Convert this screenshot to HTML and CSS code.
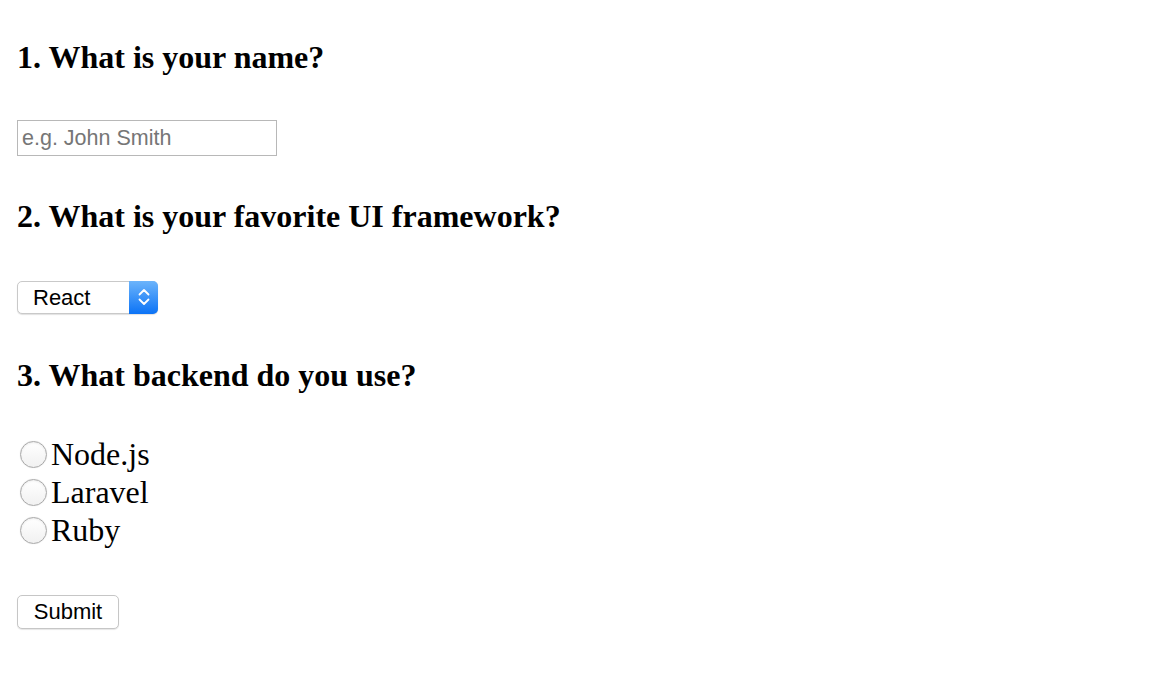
FILE: index.html
```html
<!DOCTYPE html>
<html lang="en">
<head>
    <meta charset="UTF-8">
    <meta name="viewport" content="width=device-width, initial-scale=1.0">
    <title>Survey</title>
    <link rel="stylesheet" href="styles.css">
</head>
<body>
    <form class="survey" onsubmit="return false;">
        <section class="question">
            <h2 class="question-title">1. What is your name?</h2>
            <div class="answer">
                <input type="text" class="text-field" name="name" placeholder="e.g. John Smith">
            </div>
        </section>

        <section class="question">
            <h2 class="question-title">2. What is your favorite UI framework?</h2>
            <div class="answer">
                <div class="select-wrap">
                    <select class="select-field" name="framework">
                        <option>React</option>
                        <option>Vue</option>
                        <option>Angular</option>
                    </select>
                    <span class="select-arrow">
                        <svg width="14" height="22" viewBox="0 0 14 22" fill="none" stroke="#fff" stroke-width="1.8" stroke-linecap="round" stroke-linejoin="round">
                            <path d="M2.5 8.5 L7 4 L11.5 8.5"/>
                            <path d="M2.5 13.5 L7 18 L11.5 13.5"/>
                        </svg>
                    </span>
                </div>
            </div>
        </section>

        <section class="question">
            <h2 class="question-title">3. What backend do you use?</h2>
            <div class="choices">
                <label class="choice"><input type="radio" class="radio" name="backend" value="node">Node.js</label>
                <label class="choice"><input type="radio" class="radio" name="backend" value="laravel">Laravel</label>
                <label class="choice"><input type="radio" class="radio" name="backend" value="ruby">Ruby</label>
            </div>
        </section>

        <button type="submit" class="submit-button">Submit</button>
    </form>
</body>
</html>
```

FILE: styles.css
```css
body {
    margin: 0;
    background-color: #fff;
    color: #000;
    font-family: "Liberation Serif", serif;
}

.survey {
    padding: 37px 17px;
}

.question-title {
    margin: 0;
    font-size: 32px;
    line-height: 41px;
    font-weight: bold;
}

.answer {
    display: flex;
    align-items: center;
    height: 36px;
    margin: 42px 0 40px;
}

.text-field {
    box-sizing: border-box;
    width: 260px;
    height: 36px;
    margin: 0;
    padding: 0 4px;
    border: 1px solid #b8b8b8;
    border-radius: 0;
    font-family: "Liberation Sans", Arial, sans-serif;
    font-size: 21.5px;
    color: #000;
    outline: none;
}

.text-field::placeholder {
    color: #767676;
}

.select-wrap {
    position: relative;
    width: 141px;
    height: 33px;
}

.select-field {
    -webkit-appearance: none;
    appearance: none;
    box-sizing: border-box;
    width: 100%;
    height: 100%;
    margin: 0;
    padding: 0 0 0 15px;
    border: 1px solid #c9c9c9;
    border-radius: 5px;
    background-color: #fff;
    box-shadow: 0 1px 1px rgba(0, 0, 0, 0.12);
    font-family: "Liberation Sans", Arial, sans-serif;
    font-size: 22px;
    color: #000;
    outline: none;
}

.select-arrow {
    position: absolute;
    top: 0;
    right: 0;
    bottom: 0;
    width: 29px;
    display: flex;
    align-items: center;
    justify-content: center;
    border-radius: 0 5px 5px 0;
    background: linear-gradient(#6cb4fb, #0b73f6);
    pointer-events: none;
}

.choices {
    margin-top: 39px;
}

.choice {
    display: flex;
    align-items: center;
    height: 38px;
    font-size: 32px;
    line-height: 38px;
}

.radio {
    -webkit-appearance: none;
    appearance: none;
    box-sizing: border-box;
    width: 27px;
    height: 27px;
    margin: 0 4px 0 3px;
    border: 1px solid #a9a9a9;
    border-radius: 50%;
    background: linear-gradient(#fff, #f1f1f1);
    box-shadow: inset 0 1px 2px rgba(0, 0, 0, 0.08), 0 0 1px rgba(0, 0, 0, 0.15);
}

.submit-button {
    box-sizing: border-box;
    width: 102px;
    height: 34px;
    margin-top: 46px;
    padding: 0;
    border: 1px solid #c6c6c6;
    border-radius: 5px;
    background-color: #fff;
    box-shadow: 0 1px 1px rgba(0, 0, 0, 0.1);
    font-family: "Liberation Sans", Arial, sans-serif;
    font-size: 22px;
    color: #000;
}
```
